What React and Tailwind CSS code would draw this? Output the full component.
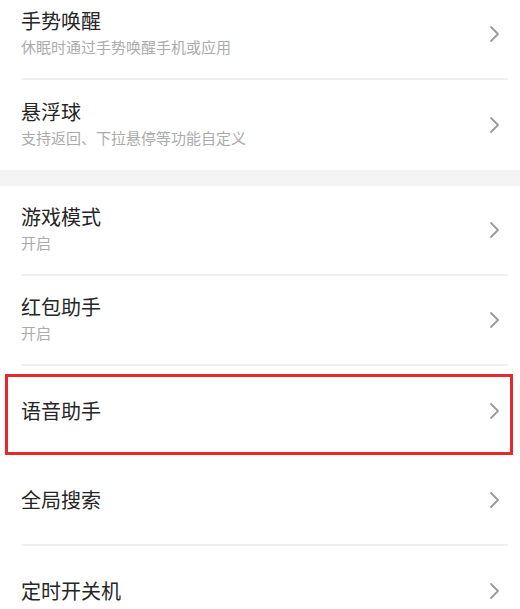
const Chevron = () => (
  <svg width="12" height="18" viewBox="0 0 12 18" fill="none" className="shrink-0">
    <path d="M3 2 L10 9 L3 16" stroke="#9a9a9a" strokeWidth="1.8" strokeLinecap="round" strokeLinejoin="round" />
  </svg>
);

const Row = ({ title, sub, divider = true }) => (
  <div
    className={`ml-[21px] mr-[12px] h-[90px] flex items-center justify-between pr-[8px] ${
      divider ? "border-b-2 border-[#f0f0f0]" : ""
    }`}
  >
    <div className="flex flex-col">
      <div className="text-[20px] leading-[26px] text-[#252525]">{title}</div>
      {sub && <div className="text-[15px] leading-[26px] text-[#ababab]">{sub}</div>}
    </div>
    <Chevron />
  </div>
);

const App = () => {
  return (
    <div
      className="w-[520px] h-[609px] overflow-hidden bg-white"
      style={{ fontFamily: '"Noto Sans CJK SC", "Noto Sans", sans-serif' }}
    >
      <div className="mt-[-10px]">
        <Row title="手势唤醒" sub="休眠时通过手势唤醒手机或应用" />
        <Row title="悬浮球" sub="支持返回、下拉悬停等功能自定义" divider={false} />

        {/* section gap */}
        <div className="h-[16px] bg-[#f4f4f4]" />

        <Row title="游戏模式" sub="开启" />
        <Row title="红包助手" sub="开启" />

        {/* highlighted row */}
        <div className="relative">
          <Row title="语音助手" divider={false} />
          <div className="absolute top-[8px] bottom-[1px] left-[5px] right-[7px] border-[3px] border-[#e8262c]" />
        </div>

        <Row title="全局搜索" />
        <Row title="定时开关机" divider={false} />
      </div>
    </div>
  );
};

export default App;
